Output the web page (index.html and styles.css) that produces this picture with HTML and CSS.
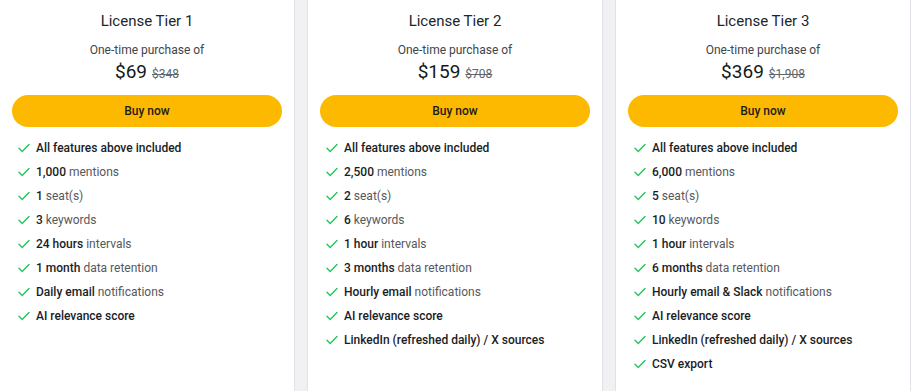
FILE: index.html
```html
<!DOCTYPE html>
<html>
<head>
<meta charset="utf-8">
<link rel="stylesheet" href="styles.css">
</head>
<body>
<div class="tiers">
  <div class="card">
    <h2 class="title">License Tier 1</h2>
    <p class="sub">One-time purchase of</p>
    <p class="price"><span class="now">$69</span><s class="was">$348</s></p>
    <button class="buy">Buy now</button>
    <ul class="features">
      <li><svg class="chk" viewBox="0 0 12 12"><path d="M1 6.3l3.2 3.1L11 2.6"/></svg><span><b>All features above included</b></span></li>
      <li><svg class="chk" viewBox="0 0 12 12"><path d="M1 6.3l3.2 3.1L11 2.6"/></svg><span><b>1,000</b> mentions</span></li>
      <li><svg class="chk" viewBox="0 0 12 12"><path d="M1 6.3l3.2 3.1L11 2.6"/></svg><span><b>1</b> seat(s)</span></li>
      <li><svg class="chk" viewBox="0 0 12 12"><path d="M1 6.3l3.2 3.1L11 2.6"/></svg><span><b>3</b> keywords</span></li>
      <li><svg class="chk" viewBox="0 0 12 12"><path d="M1 6.3l3.2 3.1L11 2.6"/></svg><span><b>24 hours</b> intervals</span></li>
      <li><svg class="chk" viewBox="0 0 12 12"><path d="M1 6.3l3.2 3.1L11 2.6"/></svg><span><b>1 month</b> data retention</span></li>
      <li><svg class="chk" viewBox="0 0 12 12"><path d="M1 6.3l3.2 3.1L11 2.6"/></svg><span><b>Daily email</b> notifications</span></li>
      <li><svg class="chk" viewBox="0 0 12 12"><path d="M1 6.3l3.2 3.1L11 2.6"/></svg><span><b>AI relevance score</b></span></li>
    </ul>
  </div>
  <div class="card">
    <h2 class="title">License Tier 2</h2>
    <p class="sub">One-time purchase of</p>
    <p class="price"><span class="now">$159</span><s class="was">$708</s></p>
    <button class="buy">Buy now</button>
    <ul class="features">
      <li><svg class="chk" viewBox="0 0 12 12"><path d="M1 6.3l3.2 3.1L11 2.6"/></svg><span><b>All features above included</b></span></li>
      <li><svg class="chk" viewBox="0 0 12 12"><path d="M1 6.3l3.2 3.1L11 2.6"/></svg><span><b>2,500</b> mentions</span></li>
      <li><svg class="chk" viewBox="0 0 12 12"><path d="M1 6.3l3.2 3.1L11 2.6"/></svg><span><b>2</b> seat(s)</span></li>
      <li><svg class="chk" viewBox="0 0 12 12"><path d="M1 6.3l3.2 3.1L11 2.6"/></svg><span><b>6</b> keywords</span></li>
      <li><svg class="chk" viewBox="0 0 12 12"><path d="M1 6.3l3.2 3.1L11 2.6"/></svg><span><b>1 hour</b> intervals</span></li>
      <li><svg class="chk" viewBox="0 0 12 12"><path d="M1 6.3l3.2 3.1L11 2.6"/></svg><span><b>3 months</b> data retention</span></li>
      <li><svg class="chk" viewBox="0 0 12 12"><path d="M1 6.3l3.2 3.1L11 2.6"/></svg><span><b>Hourly email</b> notifications</span></li>
      <li><svg class="chk" viewBox="0 0 12 12"><path d="M1 6.3l3.2 3.1L11 2.6"/></svg><span><b>AI relevance score</b></span></li>
      <li><svg class="chk" viewBox="0 0 12 12"><path d="M1 6.3l3.2 3.1L11 2.6"/></svg><span><b>LinkedIn (refreshed daily) / X sources</b></span></li>
    </ul>
  </div>
  <div class="card">
    <h2 class="title">License Tier 3</h2>
    <p class="sub">One-time purchase of</p>
    <p class="price"><span class="now">$369</span><s class="was">$1,908</s></p>
    <button class="buy">Buy now</button>
    <ul class="features">
      <li><svg class="chk" viewBox="0 0 12 12"><path d="M1 6.3l3.2 3.1L11 2.6"/></svg><span><b>All features above included</b></span></li>
      <li><svg class="chk" viewBox="0 0 12 12"><path d="M1 6.3l3.2 3.1L11 2.6"/></svg><span><b>6,000</b> mentions</span></li>
      <li><svg class="chk" viewBox="0 0 12 12"><path d="M1 6.3l3.2 3.1L11 2.6"/></svg><span><b>5</b> seat(s)</span></li>
      <li><svg class="chk" viewBox="0 0 12 12"><path d="M1 6.3l3.2 3.1L11 2.6"/></svg><span><b>10</b> keywords</span></li>
      <li><svg class="chk" viewBox="0 0 12 12"><path d="M1 6.3l3.2 3.1L11 2.6"/></svg><span><b>1 hour</b> intervals</span></li>
      <li><svg class="chk" viewBox="0 0 12 12"><path d="M1 6.3l3.2 3.1L11 2.6"/></svg><span><b>6 months</b> data retention</span></li>
      <li><svg class="chk" viewBox="0 0 12 12"><path d="M1 6.3l3.2 3.1L11 2.6"/></svg><span><b>Hourly email &amp; Slack</b> notifications</span></li>
      <li><svg class="chk" viewBox="0 0 12 12"><path d="M1 6.3l3.2 3.1L11 2.6"/></svg><span><b>AI relevance score</b></span></li>
      <li><svg class="chk" viewBox="0 0 12 12"><path d="M1 6.3l3.2 3.1L11 2.6"/></svg><span><b>LinkedIn (refreshed daily) / X sources</b></span></li>
      <li><svg class="chk" viewBox="0 0 12 12"><path d="M1 6.3l3.2 3.1L11 2.6"/></svg><span><b>CSV export</b></span></li>
    </ul>
  </div>
</div>
</body>
</html>
```

FILE: styles.css
```css
* { box-sizing: border-box; }
html, body { margin: 0; padding: 0; }
body {
  background: #f1f1f4;
  font-family: Roboto, "Liberation Sans", Arial, sans-serif;
  width: 911px;
  height: 391px;
  overflow: hidden;
}
.tiers {
  display: flex;
  gap: 12px;
  margin-left: -1px;
  height: 391px;
  overflow: hidden;
}
.card {
  flex: 0 0 296px;
  width: 296px;
  height: 391px;
  background: #fff;
  border: 1px solid #e2e1ea;
  border-top: none;
  border-bottom: none;
  padding: 11px 12px 0;
  display: flex;
  flex-direction: column;
  align-items: stretch;
}
.title {
  margin: 0;
  text-align: center;
  font-size: 15px;
  font-weight: 400;
  line-height: 20px;
  color: #1c262b;
}
.sub {
  margin: 12px 0 0;
  text-align: center;
  font-size: 12px;
  line-height: 14px;
  color: #3f4549;
}
.price {
  margin: 4px 0 0;
  display: flex;
  justify-content: center;
  align-items: baseline;
  gap: 5px;
  line-height: 22px;
}
.now {
  font-size: 19px;
  color: #15191b;
}
.was {
  font-size: 12px;
  color: #60666a;
}
.buy {
  margin-top: 10px;
  flex: 0 0 32px;
  height: 32px;
  border: none;
  border-radius: 16px;
  background: #fdb900;
  font-family: inherit;
  font-size: 12px;
  font-weight: 500;
  color: #1c1c1c;
  cursor: pointer;
}
.features {
  list-style: none;
  margin: 9px 0 0;
  padding: 0 0 0 6px;
}
.features li {
  display: flex;
  align-items: center;
  height: 24px;
  font-size: 12px;
  color: #55595c;
}
.features b {
  font-weight: 500;
  color: #1a1d1f;
}
.chk {
  width: 12px;
  height: 12px;
  margin-right: 6px;
  flex: 0 0 12px;
  fill: none;
  stroke: #22c55e;
  stroke-width: 1.4;
  stroke-linecap: round;
  stroke-linejoin: round;
}
```
